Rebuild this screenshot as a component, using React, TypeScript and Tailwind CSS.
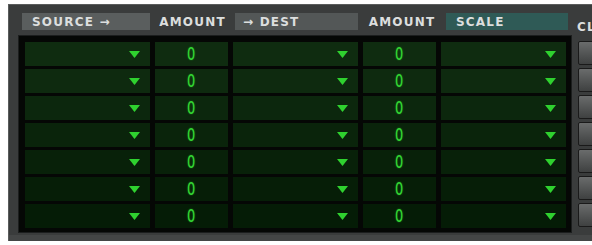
import React from "react"

const rows = [0, 1, 2, 3, 4, 5, 6]

const cellBg = [
  "bg-[#0f2c10]",
  "bg-[#0e2a0f]",
  "bg-[#0c270d]",
  "bg-[#0a240b]",
  "bg-[#082109]",
  "bg-[#061e07]",
  "bg-[#051c06]",
]

function Arrow() {
  return (
    <svg width="11" height="7" viewBox="0 0 11 7" className="shrink-0">
      <polygon points="0,0 11,0 5.5,7" fill="#2fd12f" />
    </svg>
  )
}

function DropCell({ bg }: { bg: string }) {
  return (
    <div className={`w-[126px] h-[24px] ${bg} flex items-center justify-end pr-[10px]`}>
      <Arrow />
    </div>
  )
}

function AmountCell({ bg }: { bg: string }) {
  return (
    <div className={`w-[73px] h-[24px] ${bg} flex items-center justify-center`}>
      <span className="text-[18px] leading-none text-[#35d935] font-['Liberation_Sans_Narrow','DejaVu_Sans_Condensed',sans-serif] scale-x-[0.8] [text-shadow:0_0_2px_#1a8a1a]">
        0
      </span>
    </div>
  )
}

const label = "text-[12px] font-bold tracking-[0.1em] text-[#dcdede] font-['DejaVu_Sans',sans-serif] leading-none"

export default function App() {
  return (
    <div className="w-[592px] h-[245px] bg-white overflow-hidden pt-[4px] pl-[8px]">
      <div className="w-[600px] h-[237px] bg-[#3a3c3c] border-t border-l border-[#5a5c5c] flex flex-col">
        {/* header */}
        <div className="flex items-center h-[17px] mt-[8px] pl-[13px]">
          <div className={`w-[128px] h-[17px] bg-[#5a5e5e] flex items-center pl-[10px] ${label}`}>SOURCE →</div>
          <div className={`w-[85px] flex justify-center ${label}`}>AMOUNT</div>
          <div className={`w-[123px] h-[17px] bg-[#535757] flex items-center pl-[8px] ${label}`}>→ DEST</div>
          <div className={`w-[88px] flex justify-center ${label}`}>AMOUNT</div>
          <div className={`w-[122px] h-[17px] bg-[#2f5a56] flex items-center pl-[10px] ${label}`}>SCALE</div>
          <div className={`ml-[9px] mt-[10px] ${label}`}>CL</div>
        </div>

        <div className="flex mt-[5px] pl-[9px]">
          {/* matrix */}
          <div className="w-[554px] h-[198px] bg-[#050705] p-[6px] pr-[5px] flex flex-col gap-[3px] border border-[#1c1e1e]">
            {rows.map((r) => (
              <div key={r} className="flex gap-[5px]">
                <DropCell bg={cellBg[r]} />
                <AmountCell bg={cellBg[r]} />
                <DropCell bg={cellBg[r]} />
                <AmountCell bg={cellBg[r]} />
                <DropCell bg={cellBg[r]} />
              </div>
            ))}
          </div>

          {/* side buttons */}
          <div className="ml-[6px] pt-[6px] flex flex-col gap-[3px]">
            {rows.map((r) => (
              <div
                key={r}
                className="w-[20px] h-[24px] rounded-[2px] bg-gradient-to-b from-[#6a6c6c] to-[#3f4141] border border-[#1a1a1a]"
              />
            ))}
          </div>
        </div>

        <div className="flex-1 bg-[#444646] mt-[2px]" />
      </div>
    </div>
  )
}
